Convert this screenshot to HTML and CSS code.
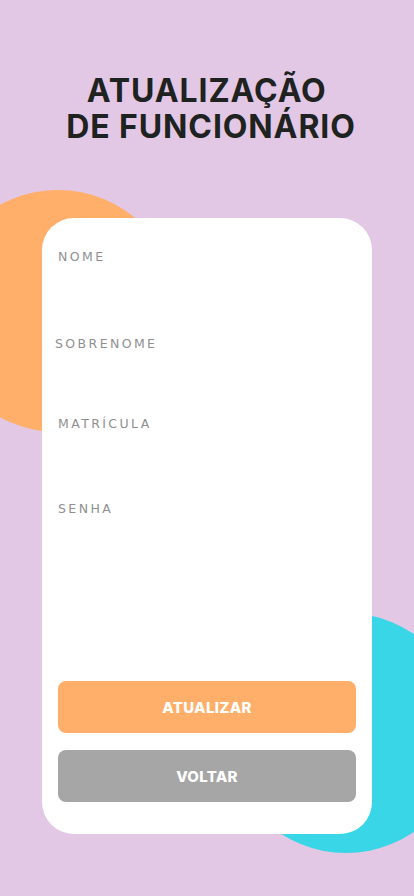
FILE: index.html
```html
<!DOCTYPE html>
<html lang="pt-BR">
<head>
<meta charset="utf-8">
<title>Atualização de Funcionário</title>
<link rel="stylesheet" href="styles.css">
</head>
<body>
<div class="screen">
  <div class="blob blob-orange"></div>
  <div class="blob blob-cyan"></div>
  <h1 class="title">ATUALIZAÇÃO&nbsp;<br>DE FUNCIONÁRIO</h1>
  <form class="card">
    <div class="fields">
      <input class="field f-nome" type="text" placeholder="NOME">
      <input class="field f-sobrenome" type="text" placeholder="SOBRENOME">
      <input class="field f-matricula" type="text" placeholder="MATRÍCULA">
      <input class="field f-senha" type="password" placeholder="SENHA">
    </div>
    <div class="actions">
      <button type="button" class="btn btn-primary">ATUALIZAR</button>
      <button type="button" class="btn btn-secondary">VOLTAR</button>
    </div>
  </form>
</div>
</body>
</html>
```
FILE: styles.css
```css
* { box-sizing: border-box; }
html, body { margin: 0; padding: 0; }
body {
  background: #e2c8e4;
  font-family: Inter, "Liberation Sans", sans-serif;
}
.screen {
  position: relative;
  width: 414px;
  height: 896px;
  overflow: hidden;
  background: #e2c8e4;
  display: flex;
  flex-direction: column;
}
.blob {
  position: absolute;
  border-radius: 50%;
}
.blob-orange {
  width: 242px;
  height: 242px;
  left: -63px;
  top: 190px;
  background: #ffaf6a;
}
.blob-cyan {
  width: 240px;
  height: 240px;
  left: 226px;
  top: 613px;
  background: #38d6e6;
}
.title {
  position: relative;
  margin: 73px 0 0 0;
  padding-left: 8px;
  text-align: center;
  font-family: Inter, "Liberation Sans", sans-serif;
  font-weight: 700;
  font-size: 32px;
  line-height: 36px;
  color: #1e2221;
  letter-spacing: 0.9px;
}
.card {
  position: relative;
  margin: 73px 0 0 42px;
  width: 330px;
  height: 616px;
  background: #fff;
  border-radius: 32px;
  padding: 0 16px;
  display: flex;
  flex-direction: column;
}
.fields {
  display: flex;
  flex-direction: column;
  flex: 1;
}
.field {
  border: none;
  outline: none;
  background: transparent;
  font-family: "DejaVu Sans", Inter, sans-serif;
  font-size: 12.5px;
  letter-spacing: 2.4px;
  height: 20px;
  padding: 0;
  color: #555;
}
.field::placeholder { color: #8f8f8f; }
.f-nome { margin-top: 28px; }
.f-sobrenome { margin-top: 67px; margin-left: -3px; }
.f-matricula { margin-top: 60px; }
.f-senha { margin-top: 65px; }
.actions {
  display: flex;
  flex-direction: column;
  gap: 17px;
  padding-bottom: 32px;
}
.btn {
  height: 52px;
  border: none;
  border-radius: 8px;
  color: #fff;
  font-family: Inter, "Liberation Sans", sans-serif;
  font-weight: 800;
  font-size: 15px;
  letter-spacing: 0.3px;
}
.btn-primary { background: #ffaf6a; }
.btn-secondary { background: #a6a6a6; }
```
